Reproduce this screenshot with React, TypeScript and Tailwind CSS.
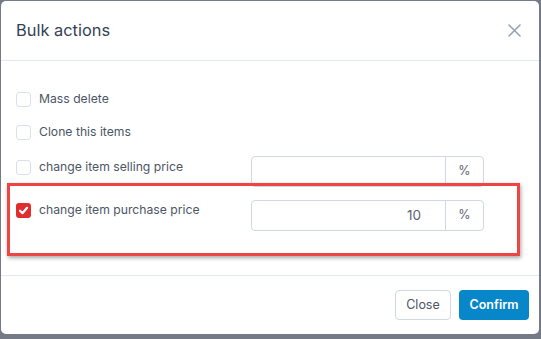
import React from "react";

const font = { fontFamily: "Inter, 'Noto Sans', sans-serif" };

function Box({ checked = false }: { checked?: boolean }) {
  if (checked) {
    return (
      <span className="flex h-[15px] w-[15px] shrink-0 items-center justify-center rounded-[3px] bg-[#e02d2d]">
        <svg width="11" height="11" viewBox="0 0 12 12" fill="none">
          <path d="M2.2 6.3 L4.9 8.9 L9.9 3.1" stroke="white" strokeWidth="2.4" strokeLinecap="round" strokeLinejoin="round" />
        </svg>
      </span>
    );
  }
  return <span className="block h-[15px] w-[15px] shrink-0 rounded-[3px] border border-[#d9e0e9] bg-white" />;
}

function PctInput({ value }: { value?: string }) {
  return (
    <div className="flex h-[31px] w-[233px] shrink-0 rounded-[4px] border border-[#cfd8e3] bg-white">
      <div className="flex flex-1 items-center justify-end pr-[24px] text-[13.5px] text-[#5b6472]">{value}</div>
      <div className="flex w-[38px] items-center justify-center border-l border-[#cfd8e3] text-[12.5px] text-[#5b6472]">%</div>
    </div>
  );
}

export default function App() {
  return (
    <div className="h-[339px] w-[541px] overflow-hidden bg-[#747b86] pl-px pt-px" style={font}>
      <div className="relative flex h-[333px] w-[538px] flex-col rounded-[5px] bg-white">
        <div className="flex h-[60px] items-center justify-between border-b border-[#e2e8f0] pl-[15px] pr-[18px]">
          <span className="text-[16.4px] text-[#334155]">Bulk actions</span>
          <svg width="13" height="13" viewBox="0 0 13 13" fill="none">
            <path d="M1 1 L12 12 M12 1 L1 12" stroke="#94a3b8" strokeWidth="1.6" strokeLinecap="round" />
          </svg>
        </div>

        <div className="flex flex-1 flex-col pl-[15px] pt-[31px] text-[12.2px] text-[#4b5565]">
          <div className="flex h-[15px] items-center gap-[8px]">
            <Box />
            <span>Mass delete</span>
          </div>
          <div className="mt-[18px] flex h-[15px] items-center gap-[8px]">
            <Box />
            <span>Clone this items</span>
          </div>
          <div className="mt-[16px] flex items-start">
            <div className="mt-[2px] flex w-[235px] items-center gap-[8px]">
              <Box />
              <span>change item selling price</span>
            </div>
            <PctInput />
          </div>
          <div className="mt-[13px] flex items-start">
            <div className="mt-[1px] flex w-[235px] items-center gap-[8px]">
              <Box checked />
              <span>change item purchase price</span>
            </div>
            <PctInput value="10" />
          </div>
        </div>

        <div className="flex h-[59px] items-center justify-end gap-[8px] border-t border-[#e2e8f0] pr-[10px]">
          <button className="h-[30px] w-[56px] rounded-[4px] border border-[#cfd8e3] bg-white text-[12.5px] text-[#4b5565]">Close</button>
          <button className="h-[30px] w-[70px] rounded-[4px] bg-[#0786c9] text-[12.5px] font-semibold text-white">Confirm</button>
        </div>

        <div className="pointer-events-none absolute left-[6px] top-[182px] h-[73px] w-[513px] border-[3px] border-[#ee4444] shadow-[1px_2px_4px_rgba(0,0,0,0.35)]" />
      </div>
    </div>
  );
}
